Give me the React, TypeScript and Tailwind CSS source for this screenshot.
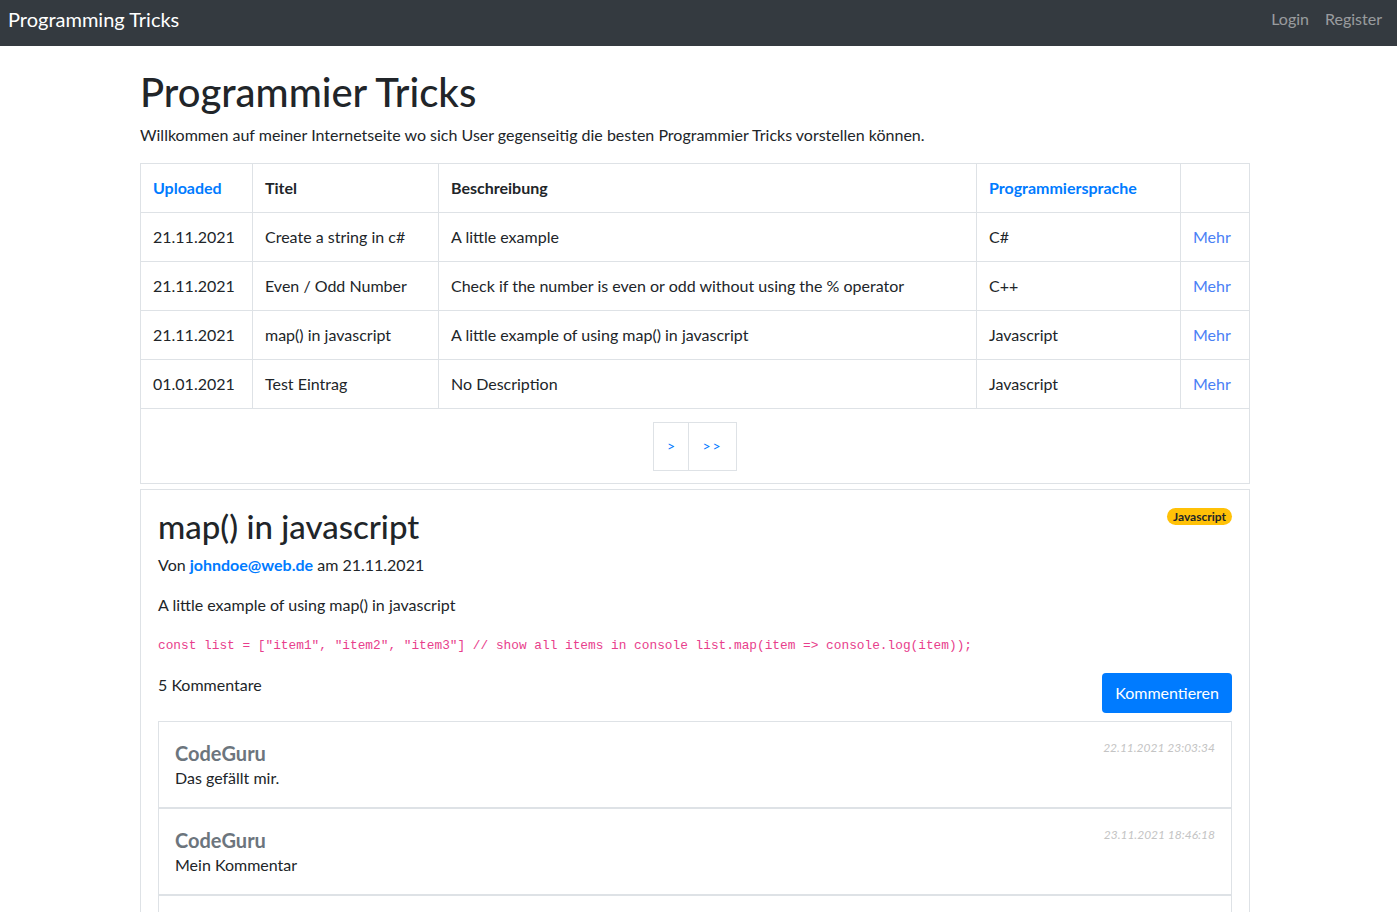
import React from 'react';

const rows = [
  { date: '21.11.2021', title: 'Create a string in c#', desc: 'A little example', lang: 'C#' },
  { date: '21.11.2021', title: 'Even / Odd Number', desc: 'Check if the number is even or odd without using the % operator', lang: 'C++' },
  { date: '21.11.2021', title: 'map() in javascript', desc: 'A little example of using map() in javascript', lang: 'Javascript' },
  { date: '01.01.2021', title: 'Test Eintrag', desc: 'No Description', lang: 'Javascript' },
];

const comments = [
  { user: 'CodeGuru', text: 'Das gefällt mir.', time: '22.11.2021 23:03:34' },
  { user: 'CodeGuru', text: 'Mein Kommentar', time: '23.11.2021 18:46:18' },
  { user: 'CodeGuru', text: 'Super Beispiel', time: '24.11.2021 09:12:05' },
];

const font = { fontFamily: 'Lato, "Noto Sans", sans-serif' };

export default function App() {
  return (
    <div className="min-h-screen bg-white text-[#212529] text-[16px] leading-6" style={font}>
      <nav className="h-[46px] bg-[#343a40] flex items-center justify-between pl-2 pr-[7px] pb-2">
        <span className="text-white text-[20px]">Programming Tricks</span>
        <div className="flex text-white/50">
          <a className="px-2">Login</a>
          <a className="px-2">Register</a>
        </div>
      </nav>

      <main className="ml-[140px] w-[1110px] pb-10">
        <h1 className="mt-[22px] mb-[7px] text-[40px] leading-[48px] font-medium">Programmier Tricks</h1>
        <p className="mb-4">
          Willkommen auf meiner Internetseite wo sich User gegenseitig die besten Programmier Tricks vorstellen können.
        </p>

        <table className="w-full border-collapse border border-[#dee2e6]">
          <thead>
            <tr className="text-left">
              <th className="w-[112px] border border-[#dee2e6] p-3 font-bold text-[#007bff]">Uploaded</th>
              <th className="w-[186px] border border-[#dee2e6] p-3 font-bold">Titel</th>
              <th className="w-[538px] border border-[#dee2e6] p-3 font-bold">Beschreibung</th>
              <th className="w-[204px] border border-[#dee2e6] p-3 font-bold text-[#007bff]">Programmiersprache</th>
              <th className="border border-[#dee2e6] p-3"></th>
            </tr>
          </thead>
          <tbody>
            {rows.map((r, i) => (
              <tr key={i}>
                <td className="border border-[#dee2e6] p-3">{r.date}</td>
                <td className="border border-[#dee2e6] p-3">{r.title}</td>
                <td className="border border-[#dee2e6] p-3">{r.desc}</td>
                <td className="border border-[#dee2e6] p-3">{r.lang}</td>
                <td className="border border-[#dee2e6] p-3 text-[#4a80f5]">Mehr</td>
              </tr>
            ))}
          </tbody>
        </table>

        <div className="h-[75px] border border-t-0 border-[#dee2e6] flex items-center justify-center">
          <div className="flex">
            <button className="w-[36px] h-[49px] border border-[#dee2e6] text-[#007bff] text-[14px]">&gt;</button>
            <button className="w-[48px] h-[49px] border border-l-0 border-[#dee2e6] text-[#007bff] text-[14px] tracking-[2px]">&gt;&gt;</button>
          </div>
        </div>

        <div className="mt-[5px] border border-[#dee2e6] p-[17px]">
          <div className="flex justify-between items-start">
            <h2 className="text-[33px] leading-[38px] font-medium">map() in javascript</h2>
            <span className="mt-px px-[6px] rounded-full bg-[#ffc107] text-[12px] leading-[17px] font-bold">Javascript</span>
          </div>
          <p className="mt-2">
            Von <a className="font-bold text-[#007bff]">johndoe@web.de</a> am 21.11.2021
          </p>
          <p className="mt-4">A little example of using map() in javascript</p>
          <p className="mt-4 pt-[2px] text-[#e83e8c] text-[12.8px] leading-[22px]" style={{ fontFamily: '"Liberation Mono", monospace' }}>
            const list = ["item1", "item2", "item3"] // show all items in console list.map(item =&gt; console.log(item));
          </p>
          <div className="mt-4 flex justify-between items-start">
            <span>5 Kommentare</span>
            <button className="h-10 px-[13px] rounded bg-[#007bff] text-white">Kommentieren</button>
          </div>
          <div className="mt-2">
            {comments.map((c, i) => (
              <div key={i} className="border border-[#dee2e6] px-4 pt-[18px] pb-[17px]">
                <div className="flex justify-between items-start">
                  <span className="text-[20px] leading-[26px] font-bold text-[#6c757d]">{c.user}</span>
                  <span className="text-[12px] leading-4 italic text-[#c4c4c4]">{c.time}</span>
                </div>
                <p>{c.text}</p>
              </div>
            ))}
          </div>
        </div>
      </main>
    </div>
  );
}
